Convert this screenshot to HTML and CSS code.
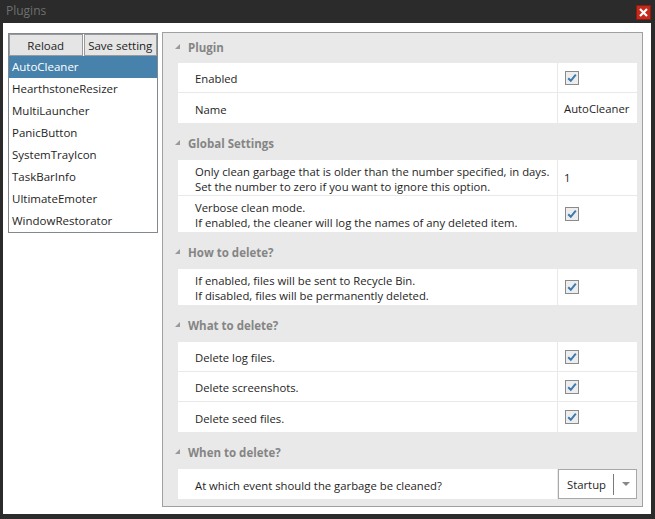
FILE: index.html
```html
<!DOCTYPE html>
<html>
<head>
<meta charset="utf-8">
<link rel="stylesheet" href="styles.css">
</head>
<body>
<div class="window">
  <div class="titlebar">
    <span class="title">Plugins</span>
    <span class="close"><svg width="15" height="15" viewBox="0 0 15 15"><rect x="0.5" y="0.5" width="14" height="14" fill="#c42b1c" stroke="#8e1b12"/><path d="M4 4 L11 11 M11 4 L4 11" stroke="#fff" stroke-width="2.2"/></svg></span>
  </div>
  <div class="client">
    <div class="sidebar">
      <div class="buttons">
        <button class="btn btn-reload">Reload</button>
        <button class="btn btn-save">Save setting</button>
      </div>
      <ul class="list">
        <li class="item selected">AutoCleaner</li>
        <li class="item">HearthstoneResizer</li>
        <li class="item">MultiLauncher</li>
        <li class="item">PanicButton</li>
        <li class="item">SystemTrayIcon</li>
        <li class="item">TaskBarInfo</li>
        <li class="item">UltimateEmoter</li>
        <li class="item">WindowRestorator</li>
      </ul>
    </div>
    <div class="grid">
      <section class="section first">
        <div class="header"><span class="tri"></span>Plugin</div>
        <div class="rows">
          <div class="row"><div class="name">Enabled</div><div class="value"><span class="check"><svg width="14" height="14" viewBox="0 0 14 14"><rect x="0.5" y="0.5" width="13" height="13" fill="#ededed" stroke="#8a8a8a"/><path d="M3.2 7.2 L5.8 9.8 L10.8 3.6" fill="none" stroke="#3b79b1" stroke-width="2"/></svg></span></div></div>
          <div class="row"><div class="name">Name</div><div class="value">AutoCleaner</div></div>
        </div>
      </section>
      <section class="section">
        <div class="header"><span class="tri"></span>Global Settings</div>
        <div class="rows">
          <div class="row tall"><div class="name">Only clean garbage that is older than the number specified, in days.<br>Set the number to zero if you want to ignore this option.</div><div class="value">1</div></div>
          <div class="row tall"><div class="name">Verbose clean mode.<br>If enabled, the cleaner will log the names of any deleted item.</div><div class="value"><span class="check"><svg width="14" height="14" viewBox="0 0 14 14"><rect x="0.5" y="0.5" width="13" height="13" fill="#ededed" stroke="#8a8a8a"/><path d="M3.2 7.2 L5.8 9.8 L10.8 3.6" fill="none" stroke="#3b79b1" stroke-width="2"/></svg></span></div></div>
        </div>
      </section>
      <section class="section">
        <div class="header"><span class="tri"></span>How to delete?</div>
        <div class="rows">
          <div class="row tall"><div class="name">If enabled, files will be sent to Recycle Bin.<br>If disabled, files will be permanently deleted.</div><div class="value"><span class="check"><svg width="14" height="14" viewBox="0 0 14 14"><rect x="0.5" y="0.5" width="13" height="13" fill="#ededed" stroke="#8a8a8a"/><path d="M3.2 7.2 L5.8 9.8 L10.8 3.6" fill="none" stroke="#3b79b1" stroke-width="2"/></svg></span></div></div>
        </div>
      </section>
      <section class="section">
        <div class="header"><span class="tri"></span>What to delete?</div>
        <div class="rows">
          <div class="row"><div class="name">Delete log files.</div><div class="value"><span class="check"><svg width="14" height="14" viewBox="0 0 14 14"><rect x="0.5" y="0.5" width="13" height="13" fill="#ededed" stroke="#8a8a8a"/><path d="M3.2 7.2 L5.8 9.8 L10.8 3.6" fill="none" stroke="#3b79b1" stroke-width="2"/></svg></span></div></div>
          <div class="row"><div class="name">Delete screenshots.</div><div class="value"><span class="check"><svg width="14" height="14" viewBox="0 0 14 14"><rect x="0.5" y="0.5" width="13" height="13" fill="#ededed" stroke="#8a8a8a"/><path d="M3.2 7.2 L5.8 9.8 L10.8 3.6" fill="none" stroke="#3b79b1" stroke-width="2"/></svg></span></div></div>
          <div class="row"><div class="name">Delete seed files.</div><div class="value"><span class="check"><svg width="14" height="14" viewBox="0 0 14 14"><rect x="0.5" y="0.5" width="13" height="13" fill="#ededed" stroke="#8a8a8a"/><path d="M3.2 7.2 L5.8 9.8 L10.8 3.6" fill="none" stroke="#3b79b1" stroke-width="2"/></svg></span></div></div>
        </div>
      </section>
      <section class="section">
        <div class="header"><span class="tri"></span>When to delete?</div>
        <div class="rows">
          <div class="row"><div class="name">At which event should the garbage be cleaned?</div><div class="value combo-cell"><div class="combo"><span class="combo-text">Startup</span><span class="combo-sep"></span><span class="combo-arrow"></span></div></div></div>
        </div>
      </section>
    </div>
  </div>
</div>
</body>
</html>
```

FILE: styles.css
```css
* { box-sizing: border-box; }
html, body { margin: 0; padding: 0; }
body {
  background: #2b2b2b;
  font-family: "Open Sans", "Noto Sans", sans-serif;
  font-size: 11.3px;
  color: #1e1e1e;
  width: 655px;
  height: 519px;
  overflow: hidden;
}
.window { width: 655px; height: 519px; }
.titlebar {
  height: 23px;
  display: flex;
  align-items: center;
  justify-content: space-between;
  padding: 0 4px 0 6px;
}
.title { color: #6f6f6f; font-size: 12px; position: relative; top: -1px; }
.close { display: flex; margin-top: 2px; }
.client {
  margin: 0 4px 0 3px;
  height: 491px;
  background: #fff;
  display: flex;
  align-items: flex-start;
  gap: 4px;
  padding: 9px 0 0 5px;
}
.sidebar {
  width: 150px;
  height: 200px;
  margin-top: 1px;
  border: 1px solid #828790;
  display: flex;
  flex-direction: column;
}
.buttons { display: flex; height: 22px; }
.btn {
  font: inherit;
  font-size: 11.5px;
  color: #1e1e1e;
  background: #e5e5e5;
  border: 1px solid #9a9a9a;
  padding: 0;
  height: 22px;
  margin: 0;
}
.btn-reload { width: 74px; }
.btn-save { width: 74px; margin-left: 1px; }
.list { list-style: none; margin: 0; padding: 0; font-size: 11.5px; }
.item { height: 22px; line-height: 22px; padding-left: 3px; }
.item.selected { background: #4782ad; color: #fff; }

.grid {
  width: 481px;
  height: 475px;
  border: 1px solid #a0a0a0;
  background: #e9e9e9;
  padding-right: 5px;
}
.section { margin-top: 7px; }
.section.first { margin-top: 0; }
.header {
  height: 30px;
  display: flex;
  align-items: center;
  color: #858585;
  font-weight: 700;
  font-size: 11.5px;
  padding-left: 12px;
  padding-bottom: 4px;
}
.section.first .header { padding-bottom: 2px; }
.tri {
  width: 0; height: 0;
  border-left: 5px solid transparent;
  border-bottom: 5px solid #9a9a9a;
  margin-right: 8px;
  margin-top: -2px;
}
.rows { margin-left: 15px; background: #fff; }
.row {
  display: flex;
  height: 30px;
  border-bottom: 1px solid #e9e9e9;
}
.row:last-child { border-bottom: none; height: 30px; }
.row.tall { height: 36px; }
.name {
  width: 380px;
  padding-left: 17px;
  padding-top: 2px;
  display: flex;
  align-items: center;
  line-height: 15px;
  border-right: 1px solid #e9e9e9;
}
.value {
  flex: 1;
  display: flex;
  align-items: center;
  padding-left: 6px;
}
.check { display: flex; margin-left: 1px; }
.combo-cell { padding-left: 0; align-items: stretch; }
.combo {
  flex: 1;
  border: 1px solid #a8a8a8;
  display: flex;
  align-items: center;
  padding-left: 8px;
}
.combo-text { width: 46px; }
.combo-sep { width: 1px; height: 21px; background: #7a7a7a; }
.combo-arrow {
  width: 0; height: 0;
  margin-left: 8px;
  border-left: 4px solid transparent;
  border-right: 4px solid transparent;
  border-top: 4px solid #888;
}
```
